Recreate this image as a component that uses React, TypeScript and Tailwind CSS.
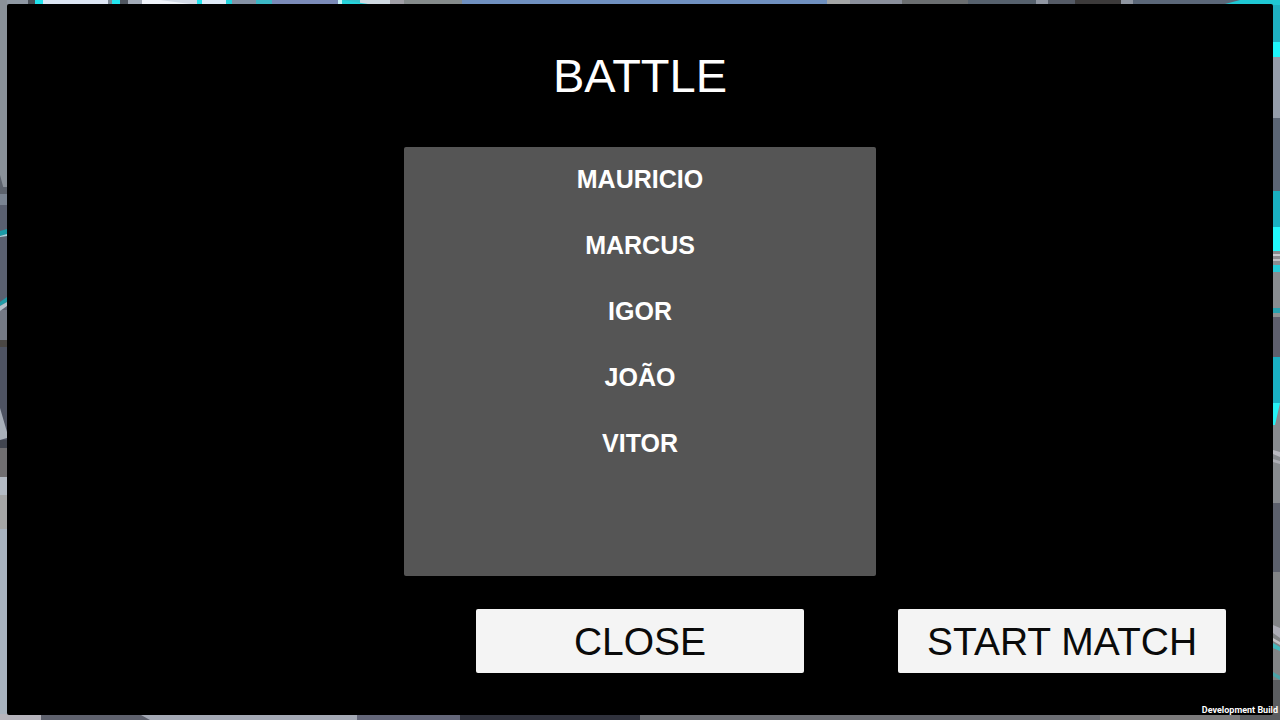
import React from 'react';

const players = ['MAURICIO', 'MARCUS', 'IGOR', 'JOÃO', 'VITOR'];

type Strip = { at: number; size: number; color: string };

const topStrips: Strip[] = [
  { at: 0, size: 28, color: '#8f98a3' },
  { at: 28, size: 7, color: '#4b5058' },
  { at: 35, size: 8, color: '#22e4ee' },
  { at: 43, size: 65, color: '#dde6f4' },
  { at: 108, size: 4, color: '#7c8794' },
  { at: 112, size: 8, color: '#22e4ee' },
  { at: 120, size: 8, color: '#4f5660' },
  { at: 128, size: 14, color: '#a3abb8' },
  { at: 142, size: 55, color: '#d3dae6' },
  { at: 197, size: 5, color: '#22e4ee' },
  { at: 202, size: 24, color: '#dfeaf8' },
  { at: 226, size: 6, color: '#22d4de' },
  { at: 232, size: 24, color: '#8592a5' },
  { at: 256, size: 16, color: '#3cb8c6' },
  { at: 272, size: 66, color: '#7b8bb8' },
  { at: 338, size: 4, color: '#c8f4f8' },
  { at: 342, size: 18, color: '#34c2cc' },
  { at: 360, size: 30, color: '#d0dae2' },
  { at: 390, size: 14, color: '#a09fa6' },
  { at: 404, size: 58, color: '#858b8b' },
  { at: 462, size: 365, color: '#6f90bf' },
  { at: 827, size: 23, color: '#a4a6a6' },
  { at: 850, size: 52, color: '#8a8f9b' },
  { at: 902, size: 66, color: '#6b6e70' },
  { at: 968, size: 68, color: '#56616d' },
  { at: 1036, size: 12, color: '#9096a2' },
  { at: 1048, size: 27, color: '#555b66' },
  { at: 1075, size: 46, color: '#3c3a3a' },
  { at: 1121, size: 12, color: '#8f95a0' },
  { at: 1133, size: 92, color: '#5b6778' },
  { at: 1225, size: 55, color: '#1fc8d4' },
];

const bottomStrips: Strip[] = [
  { at: 0, size: 41, color: '#b6b4bc' },
  { at: 41, size: 100, color: '#5f626e' },
  { at: 141, size: 216, color: '#a4a9b5' },
  { at: 357, size: 103, color: '#64677a' },
  { at: 460, size: 180, color: '#30323d' },
  { at: 640, size: 460, color: '#6c6e74' },
  { at: 1100, size: 140, color: '#7c7b7c' },
  { at: 1240, size: 40, color: '#5b5d60' },
];

const leftStrips: Strip[] = [
  { at: 0, size: 187, color: '#8a9199' },
  { at: 187, size: 7, color: '#5c626c' },
  { at: 194, size: 11, color: '#7a8492' },
  { at: 205, size: 105, color: '#5a6070' },
  { at: 310, size: 30, color: '#757a85' },
  { at: 340, size: 7, color: '#4a4744' },
  { at: 347, size: 93, color: '#4e5362' },
  { at: 440, size: 8, color: '#41454f' },
  { at: 448, size: 29, color: '#706e70' },
  { at: 477, size: 18, color: '#b4bbc4' },
  { at: 495, size: 34, color: '#a5a6a6' },
  { at: 529, size: 191, color: '#a8b3bf' },
];

const rightStrips: Strip[] = [
  { at: 0, size: 42, color: '#1fb0c2' },
  { at: 42, size: 15, color: '#1ff6fc' },
  { at: 57, size: 61, color: '#959daa' },
  { at: 118, size: 73, color: '#5b6574' },
  { at: 191, size: 36, color: '#1ab0c2' },
  { at: 227, size: 24, color: '#22f8fc' },
  { at: 251, size: 14, color: '#8b8b90' },
  { at: 265, size: 7, color: '#26cbd8' },
  { at: 272, size: 36, color: '#888c90' },
  { at: 308, size: 5, color: '#27a2b0' },
  { at: 313, size: 4, color: '#8f9294' },
  { at: 317, size: 40, color: '#5e5f6d' },
  { at: 357, size: 46, color: '#1ab0c4' },
  { at: 403, size: 100, color: '#888b8f' },
  { at: 503, size: 69, color: '#5c606c' },
  { at: 572, size: 108, color: '#828486' },
  { at: 680, size: 40, color: '#5b5d60' },
];

// Slice of the 3D arena that stays visible around the dialog
const ArenaBackdrop = () => (
  <svg
    className="absolute inset-0 h-full w-full"
    viewBox="0 0 1280 720"
    preserveAspectRatio="none"
    aria-hidden="true"
  >
    {leftStrips.map((s) => (
      <rect key={s.at} x={0} y={s.at} width={20} height={s.size} fill={s.color} />
    ))}
    {rightStrips.map((s) => (
      <rect key={s.at} x={1260} y={s.at} width={20} height={s.size} fill={s.color} />
    ))}
    {topStrips.map((s) => (
      <rect key={s.at} x={s.at} y={0} width={s.size} height={5} fill={s.color} />
    ))}
    {bottomStrips.map((s) => (
      <rect key={s.at} x={s.at} y={714} width={s.size} height={6} fill={s.color} />
    ))}
    <rect x={0} y={0} width={7} height={10} fill="#8a9199" />

    <path d="M0 175L4 190H0Z" fill="#5c626c" />
    <path d="M0 231L7 229V234L0 236Z" fill="#1a9aa6" />
    <path d="M0 236L7 234V236L0 237Z" fill="#a9d4dc" />
    <path d="M0 302L7 297V302L0 306Z" fill="#1f9aa6" />
    <path d="M0 306L7 302V306L0 311Z" fill="#b4c0ca" />
    <path d="M0 408L7 432V438L0 440Z" fill="#a9b0ba" />

    <path d="M142 0H160L190 4H142Z" fill="#f0f4fa" />
    <path d="M342 0L368 4H342Z" fill="#25d4dc" />
    <path d="M1225 4L1240 0H1225Z" fill="#5b6778" />
    <path d="M141 715L150 720H141Z" fill="#5f626e" />

    <rect x={1273} y={254} width={7} height={2} fill="#c9c9cf" />
    <rect x={1273} y={259} width={7} height={2} fill="#c0bfc4" />
    <path d="M1273 403H1280L1275 425H1273Z" fill="#25f2f6" />
    <path d="M1273 450L1280 452V457L1273 454Z" fill="#b9b9c0" />
    <path d="M1273 459L1280 461V464L1273 462Z" fill="#adaeb5" />
    <path d="M1273 625L1280 628V638L1273 633Z" fill="#adadb6" />
    <path d="M1273 638L1280 642V645L1273 641Z" fill="#c4c4c8" />
    <path d="M1273 643L1280 647V651L1273 648Z" fill="#43b8bd" />
    <path d="M1273 672L1280 676V680L1273 676Z" fill="#4aa4a8" />
  </svg>
);

const MenuButton = ({ children }: { children: React.ReactNode }) => (
  <button
    type="button"
    className="h-16 w-[328px] rounded-[2px] bg-[#f4f4f4] text-[39px] leading-none text-[#0a0a0a] hover:bg-white"
  >
    {children}
  </button>
);

const App = () => {
  return (
    <div className="relative flex min-h-screen flex-col bg-[#6c6e74] px-[7px] pt-1 pb-[5px] font-['Liberation_Sans',Arial,sans-serif]">
      <ArenaBackdrop />
      <main className="relative flex flex-1 flex-col items-center rounded-[2px] bg-black pt-12 pb-[42px]">
        <h1 className="text-[47px] leading-[48px] text-white">BATTLE</h1>

        <ul className="mt-[47px] mb-[33px] w-[472px] flex-1 rounded-[2px] bg-[#555555] text-center">
          {players.map((player) => (
            <li
              key={player}
              className="h-[66px] text-[25px] leading-[64px] font-bold text-white"
            >
              {player}
            </li>
          ))}
        </ul>

        <div className="grid w-full grid-cols-[1fr_auto_1fr] pr-[47px] pl-[47px]">
          <div className="col-start-2">
            <MenuButton>CLOSE</MenuButton>
          </div>
          <div className="flex justify-end">
            <MenuButton>START MATCH</MenuButton>
          </div>
        </div>
      </main>

      <p className="absolute right-[2px] bottom-[4px] font-[Roboto,sans-serif] text-[9px] leading-3 font-bold text-white">
        Development Build
      </p>
    </div>
  );
};

export default App;
